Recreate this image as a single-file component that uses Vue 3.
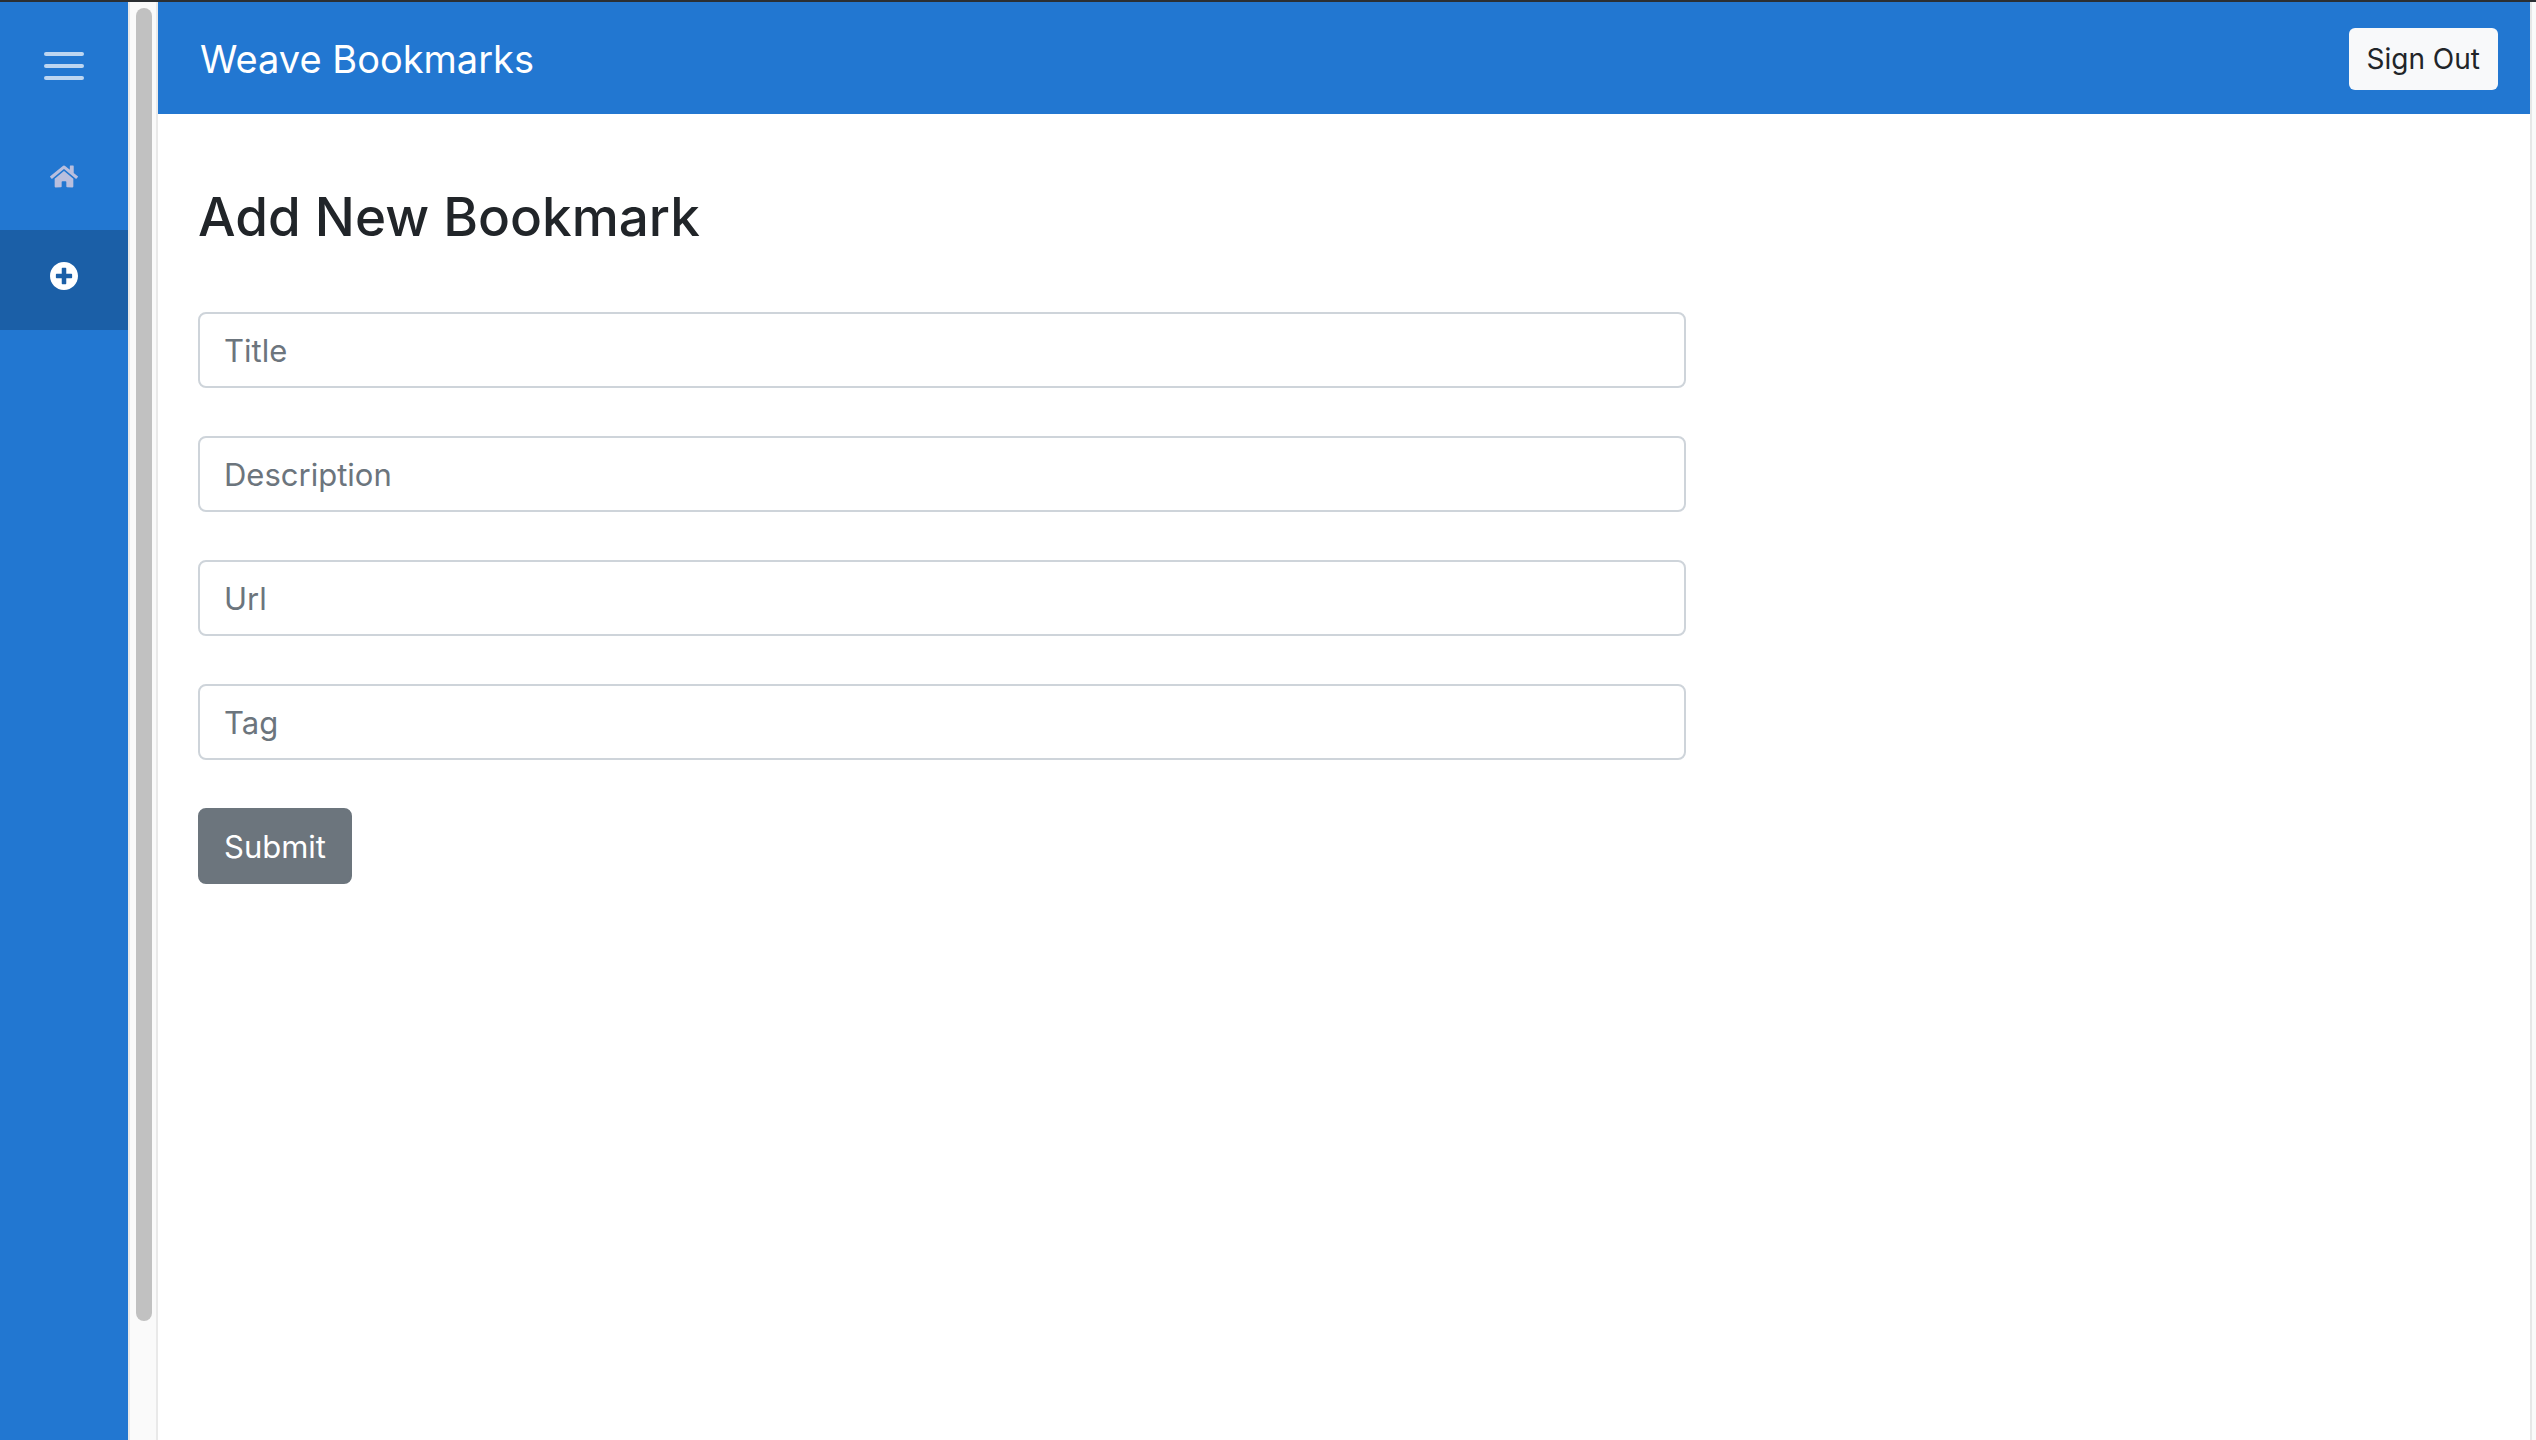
<script setup>
const fields = [
  { id: 'title', label: 'Title' },
  { id: 'description', label: 'Description' },
  { id: 'url', label: 'Url' },
  { id: 'tag', label: 'Tag' }
]
</script>

<template>
  <div class="app">
    <nav class="sidenav" aria-label="Main">
      <button class="toggle" type="button" aria-label="Toggle menu">
        <span class="bar"></span>
        <span class="bar"></span>
        <span class="bar"></span>
      </button>
      <a class="nav-item" href="#home" aria-label="Home">
        <svg class="icon-home" viewBox="0 0 576 512" fill="currentColor">
          <path d="M280.37 148.26L96 300.11V464a16 16 0 0 0 16 16l112.06-.29a16 16 0 0 0 15.92-16V368a16 16 0 0 1 16-16h64a16 16 0 0 1 16 16v95.64a16 16 0 0 0 16 16.05L464 480a16 16 0 0 0 16-16V300L295.67 148.26a12.19 12.19 0 0 0-15.3 0zM571.6 251.47L488 182.56V44.05a12 12 0 0 0-12-12h-56a12 12 0 0 0-12 12v72.61L318.47 43a48 48 0 0 0-61 0L4.34 251.47a12 12 0 0 0-1.6 16.9l25.5 31A12 12 0 0 0 45.15 301l235.22-193.74a12.19 12.19 0 0 1 15.3 0L530.9 301a12 12 0 0 0 16.9-1.6l25.5-31a12 12 0 0 0-1.7-16.93z" />
        </svg>
      </a>
      <a class="nav-item active" href="#add" aria-label="Add bookmark" aria-current="page">
        <svg class="icon-add" viewBox="8 8 496 496" fill="currentColor">
          <path d="M256 8C119 8 8 119 8 256s111 248 248 248 248-111 248-248S393 8 256 8zm144 276c0 6.600-5.400 12-12 12h-92v92c0 6.600-5.400 12-12 12h-56c-6.600 0-12-5.400-12-12v-92h-92c-6.600 0-12-5.400-12-12v-56c0-6.600 5.400-12 12-12h92v-92c0-6.600 5.400-12 12-12h56c6.600 0 12 5.400 12 12v92h92c6.600 0 12 5.400 12 12v56z" />
        </svg>
      </a>
    </nav>
    <div class="track"><div class="thumb"></div></div>
    <div class="page">
      <header class="topbar">
        <span class="brand">Weave Bookmarks</span>
        <button class="sign-out" type="button">Sign Out</button>
      </header>
      <main class="content">
        <h1>Add New Bookmark</h1>
        <form class="form" @submit.prevent>
          <input
            v-for="f in fields"
            :id="f.id"
            :key="f.id"
            class="field"
            type="text"
            :name="f.id"
            :placeholder="f.label"
            :aria-label="f.label"
          />
          <button class="submit" type="submit">Submit</button>
        </form>
      </main>
    </div>
    <div class="edge"></div>
  </div>
</template>

<style>
body {
  background: #fff;
}
</style>

<style scoped>
.app,
.app * {
  box-sizing: border-box;
}
.app {
  display: flex;
  min-height: 100vh;
  border-top: 2px solid #2b2f33;
  font-family: Inter, "Liberation Sans", sans-serif;
  color: #212529;
}
button,
input {
  font-family: inherit;
  margin: 0;
}
.sidenav {
  flex: none;
  width: 128px;
  display: flex;
  flex-direction: column;
  background: #2277d1;
}
.toggle {
  height: 128px;
  display: flex;
  flex-direction: column;
  align-items: center;
  gap: 8px;
  padding: 50px 0 0;
  border: 0;
  background: none;
}
.bar {
  width: 40px;
  height: 4px;
  border-radius: 2px;
  background: #bdd6f1;
}
.nav-item {
  height: 100px;
  display: flex;
  align-items: center;
  justify-content: center;
  padding-bottom: 8px;
  color: #b9bfde;
}
.nav-item.active {
  background: #1b5fa7;
  color: #fff;
}
.icon-home {
  width: 28px;
  height: 25px;
}
.icon-add {
  width: 28px;
  height: 28px;
}
.track {
  flex: none;
  width: 30px;
  padding: 6px;
  border: solid #e9e9e9;
  border-width: 0 2px;
  background: #fafafa;
}
.thumb {
  width: 16px;
  height: calc(92vh - 12px);
  border-radius: 8px;
  background: #c1c1c1;
}
.page {
  flex: 1;
  min-width: 0;
}
.topbar {
  height: 112px;
  display: flex;
  align-items: center;
  justify-content: space-between;
  padding: 2px 32px 0 42px;
  background: #2277d1;
}
.brand {
  font-size: 38px;
  line-height: 60px;
  color: #fff;
}
.sign-out {
  height: 62px;
  padding: 0 18px;
  border: 0;
  border-radius: 6px;
  background: #f8f9fa;
  color: #212529;
  font-size: 28px;
}
.content {
  padding: 70px 40px;
}
h1 {
  margin: 0 0 62px;
  font-size: 53px;
  line-height: 66px;
  font-weight: 500;
}
.form {
  width: 66.666%;
  padding-right: 40px;
  display: flex;
  flex-direction: column;
  align-items: flex-start;
  gap: 48px;
}
.field,
.submit {
  height: 76px;
  padding: 0 24px;
  border: 2px solid #ced4da;
  border-radius: 8px;
  font-size: 31px;
}
.field {
  width: 100%;
  background: #fff;
  color: #495057;
}
.field::placeholder {
  color: #6c757d;
  opacity: 1;
}
.submit {
  border-color: #6c757d;
  background: #6c757d;
  color: #fff;
}
.edge {
  flex: none;
  width: 6px;
  border-left: 2px solid #e7e7e7;
  background: #fafafa;
}
</style>
